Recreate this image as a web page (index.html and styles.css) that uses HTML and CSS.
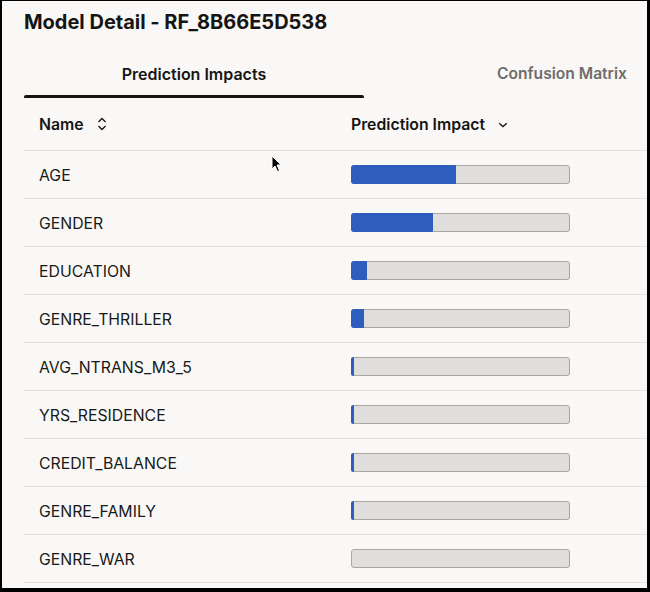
FILE: index.html
```html
<!DOCTYPE html>
<html lang="en">
<head>
<meta charset="utf-8">
<title>Model Detail</title>
<link rel="stylesheet" href="styles.css">
</head>
<body>
<div class="frame">
  <h1 class="title">Model Detail - RF_8B66E5D538</h1>
  <div class="tabs">
    <div class="tab tab-active">Prediction Impacts</div>
    <div class="tab tab-other">Confusion Matrix</div>
  </div>
  <div class="table">
    <div class="row head">
      <div class="cell"><span>Name</span>
        <svg class="sort" width="10" height="14" viewBox="0 0 10 14"><path d="M1.5 5 L5 1.5 L8.5 5 M1.5 9 L5 12.5 L8.5 9" fill="none" stroke="#161513" stroke-width="1.3"/></svg>
      </div>
      <div class="cell cell2"><span>Prediction Impact</span>
        <svg class="chev" width="10" height="6" viewBox="0 0 10 6"><path d="M1.2 1.2 L5 4.6 L8.8 1.2" fill="none" stroke="#161513" stroke-width="1.3"/></svg>
      </div>
    </div>
    <div class="row"><div class="cell name">AGE</div><div class="cell cell2"><div class="bar"><div class="fill" style="width:105px"></div></div></div></div>
    <div class="row"><div class="cell name">GENDER</div><div class="cell cell2"><div class="bar"><div class="fill" style="width:82px"></div></div></div></div>
    <div class="row"><div class="cell name">EDUCATION</div><div class="cell cell2"><div class="bar"><div class="fill" style="width:16px"></div></div></div></div>
    <div class="row"><div class="cell name">GENRE_THRILLER</div><div class="cell cell2"><div class="bar"><div class="fill" style="width:13px"></div></div></div></div>
    <div class="row"><div class="cell name">AVG_NTRANS_M3_5</div><div class="cell cell2"><div class="bar"><div class="fill" style="width:3px"></div></div></div></div>
    <div class="row"><div class="cell name">YRS_RESIDENCE</div><div class="cell cell2"><div class="bar"><div class="fill" style="width:3px"></div></div></div></div>
    <div class="row"><div class="cell name">CREDIT_BALANCE</div><div class="cell cell2"><div class="bar"><div class="fill" style="width:3px"></div></div></div></div>
    <div class="row"><div class="cell name">GENRE_FAMILY</div><div class="cell cell2"><div class="bar"><div class="fill" style="width:3px"></div></div></div></div>
    <div class="row"><div class="cell name">GENRE_WAR</div><div class="cell cell2"><div class="bar"></div></div></div>
  </div>
  <svg class="cursor" width="12" height="18" viewBox="0 0 12 18"><path d="M1 1 L1 14 L4 11 L6.5 16.5 L8.5 15.5 L6 10 L10 10 Z" fill="#000" stroke="#fff" stroke-width="1"/></svg>
</div>
</body>
</html>
```
FILE: styles.css
```css
html, body {
  margin: 0;
  padding: 0;
  background: #f9f8f6;
}
.frame {
  position: relative;
  width: 650px;
  height: 592px;
  box-sizing: border-box;
  border-style: solid;
  border-color: #000;
  border-width: 1px 3px 4px 2px;
  background: #f9f8f6;
  overflow: hidden;
  font-family: Inter, "Noto Sans", sans-serif;
  color: #161513;
}
.title {
  margin: 0;
  padding: 9px 0 0 22px;
  font-size: 20px;
  line-height: 24px;
  font-weight: 700;
  letter-spacing: -0.02px;
}
.tabs {
  display: flex;
  margin: 16px 0 0 22px;
  white-space: nowrap;
}
.tab {
  font-size: 16px;
  font-weight: 600;
  line-height: 20px;
  box-sizing: border-box;
  height: 48px;
  padding-top: 14px;
}
.tab-active {
  position: relative;
  width: 340px;
  text-align: center;
}
.tab-active::after {
  content: "";
  position: absolute;
  left: 0;
  right: 0;
  bottom: 0;
  height: 3px;
  background: #161513;
  border-radius: 2px 2px 0 0;
}
.tab-other {
  padding-left: 133px;
  color: #6f6c69;
  font-size: 15.6px;
}
.table {
  margin-left: 22px;
}
.row {
  display: grid;
  grid-template-columns: 312px 1fr;
  box-sizing: border-box;
  height: 48px;
  border-bottom: 1px solid #e2e0dd;
  font-size: 15.8px;
}
.row.head {
  height: 53px;
  font-weight: 600;
  font-size: 15.8px;
}
.cell {
  display: flex;
  align-items: center;
  padding-left: 15px;
}
.name {
  padding-top: 2px;
  color: #1a1918;
}
.sort {
  margin-left: 13px;
}
.chev {
  margin-left: 13px;
  margin-top: 1px;
}
.bar {
  position: relative;
  width: 217px;
  height: 17px;
  border: 1px solid #a9a7a4;
  border-radius: 3px;
  background: #dfdedc;
}
.fill {
  position: absolute;
  left: -1px;
  top: -1px;
  bottom: -1px;
  background: #2e5ebd;
  border-radius: 3px 1px 1px 3px;
}
.cursor {
  position: absolute;
  left: 269px;
  top: 154px;
}
```
